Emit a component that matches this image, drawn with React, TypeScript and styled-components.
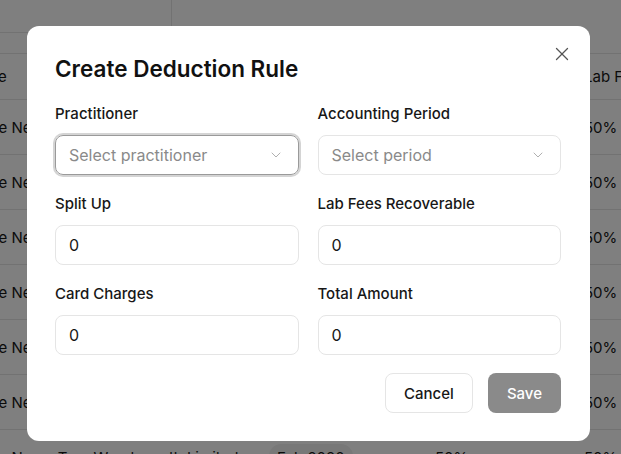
import styled, { createGlobalStyle } from "styled-components";
import { X, ChevronDown } from "lucide-react";

const GlobalStyle = createGlobalStyle`
  html, body {
    margin: 0;
    padding: 0;
    background: #ffffff;
    font-family: Inter, "Noto Sans", sans-serif;
    color: #171717;
    overflow: hidden;
  }
`;

const Page = styled.div`
  width: 621px;
  height: 454px;
  overflow: hidden;
`;

const Toolbar = styled.div`
  height: 33px;
  display: flex;
`;

const SearchBox = styled.div`
  width: 172px;
  border-right: 1px solid #e5e5e5;
  border-bottom: 1px solid #e5e5e5;
  box-sizing: border-box;
`;

const Table = styled.div`
  margin-top: 20px;
  margin-left: -20px;
  border-top: 1px solid #e5e5e5;
`;

const Row = styled.div<{ $head?: boolean }>`
  display: grid;
  grid-template-columns: 289px 166px 149px 120px;
  align-items: center;
  height: ${(p) => (p.$head ? "45px" : "54px")};
  border-bottom: 1px solid #e5e5e5;
  font-size: 15px;
  color: #171717;
  white-space: nowrap;
`;

const Pill = styled.span`
  justify-self: start;
  padding: 4px 8px;
  border-radius: 12px;
  background: #f1f1f1;
`;

const Overlay = styled.div`
  position: fixed;
  inset: 0;
  background: rgba(0, 0, 0, 0.5);
  display: flex;
  align-items: flex-start;
  padding: 26px 0 0 27px;
`;

const Modal = styled.div`
  position: relative;
  width: 563px;
  box-sizing: border-box;
  padding: 29px 29px 28px 28px;
  background: #ffffff;
  border-radius: 12px;
`;

const CloseButton = styled.button`
  position: absolute;
  top: 17px;
  right: 17px;
  width: 22px;
  height: 22px;
  padding: 0;
  border: none;
  background: none;
  color: #555;
  display: flex;
  align-items: center;
  justify-content: center;
`;

const Title = styled.h2`
  margin: 0 0 21px;
  font-size: 22.5px;
  line-height: 28px;
  font-weight: 600;
  color: #111;
`;

const FormGrid = styled.div`
  display: grid;
  grid-template-columns: 1fr 1fr;
  column-gap: 19px;
  row-gap: 19px;
`;

const Field = styled.div`
  display: flex;
  flex-direction: column;
  gap: 11px;
`;

const Label = styled.label`
  font-size: 15px;
  line-height: 20px;
  font-weight: 500;
  color: #171717;
`;

const Box = styled.div<{ $focused?: boolean }>`
  height: 40px;
  box-sizing: border-box;
  border: 1px solid ${(p) => (p.$focused ? "#9a9a9a" : "#e5e5e5")};
  box-shadow: ${(p) => (p.$focused ? "0 0 0 2px #d4d4d4" : "none")};
  border-radius: 8px;
  padding: 0 14px 0 13px;
  display: flex;
  align-items: center;
  justify-content: space-between;
  font-size: 16px;
  color: #171717;
`;

const Placeholder = styled.span`
  color: #8a8a8a;
`;

const Actions = styled.div`
  display: flex;
  justify-content: flex-end;
  gap: 15px;
  margin-top: 18px;
`;

const Button = styled.button<{ $primary?: boolean }>`
  height: 40px;
  padding: 0 18px;
  border-radius: 8px;
  font-family: Inter, sans-serif;
  font-size: 15px;
  font-weight: 500;
  border: 1px solid ${(p) => (p.$primary ? "transparent" : "#e5e5e5")};
  background: ${(p) => (p.$primary ? "#171717" : "#ffffff")};
  color: ${(p) => (p.$primary ? "#ffffff" : "#171717")};
  opacity: ${(p) => (p.$primary ? 0.5 : 1)};
`;

const rows = Array.from({ length: 7 });

function SelectBox({ placeholder, focused }: { placeholder: string; focused?: boolean }) {
  return (
    <Box $focused={focused}>
      <Placeholder>{placeholder}</Placeholder>
      <ChevronDown size={16} strokeWidth={1.5} color="#b0b0b0" />
    </Box>
  );
}

export default function App() {
  return (
    <>
      <GlobalStyle />
      <Page>
        <Toolbar>
          <SearchBox />
        </Toolbar>
        <Table>
          <Row $head>
            <span>Site</span>
            <span>Period</span>
            <span>Split Up</span>
            <span>Lab Fees</span>
          </Row>
          {rows.map((_, i) => (
            <Row key={i}>
              <span>The Neem Tree Wandsworth Limited</span>
              <Pill>Feb 2020</Pill>
              <span>50%</span>
              <span>50%</span>
            </Row>
          ))}
        </Table>
      </Page>
      <Overlay>
        <Modal>
          <CloseButton>
            <X size={22} strokeWidth={1.4} />
          </CloseButton>
          <Title>Create Deduction Rule</Title>
          <FormGrid>
            <Field>
              <Label>Practitioner</Label>
              <SelectBox placeholder="Select practitioner" focused />
            </Field>
            <Field>
              <Label>Accounting Period</Label>
              <SelectBox placeholder="Select period" />
            </Field>
            <Field>
              <Label>Split Up</Label>
              <Box>0</Box>
            </Field>
            <Field>
              <Label>Lab Fees Recoverable</Label>
              <Box>0</Box>
            </Field>
            <Field>
              <Label>Card Charges</Label>
              <Box>0</Box>
            </Field>
            <Field>
              <Label>Total Amount</Label>
              <Box>0</Box>
            </Field>
          </FormGrid>
          <Actions>
            <Button>Cancel</Button>
            <Button $primary>Save</Button>
          </Actions>
        </Modal>
      </Overlay>
    </>
  );
}
